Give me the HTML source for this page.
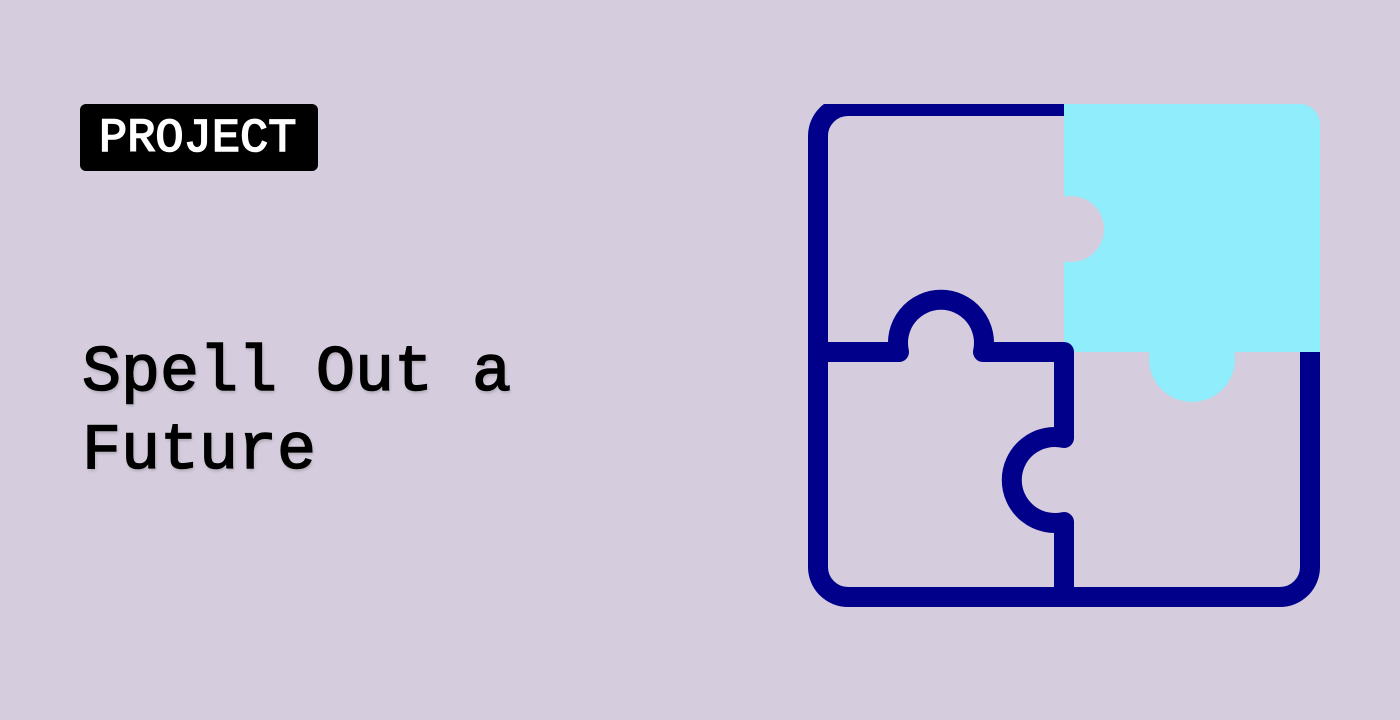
<!DOCTYPE html>
<html><head><meta charset="utf-8"><style>
html,body{margin:0;padding:0;}
body{width:1400px;height:720px;background:#d5ccdd;position:relative;overflow:hidden;font-family:"Liberation Mono",monospace;}
.badge{position:absolute;left:80px;top:104px;width:238px;height:67px;background:#000;border-radius:6px;color:#fff;font-size:47px;line-height:71px;box-sizing:border-box;padding-left:19px;-webkit-text-stroke:1.6px #fff;}
.title{position:absolute;left:82px;top:334px;font-size:65px;line-height:78px;color:#000;-webkit-text-stroke:1.6px #000;text-shadow:0 0 2px #fff,1px 2px 3px rgba(0,0,0,.25);}
svg{position:absolute;left:0;top:0;}
</style></head><body>
<div class="badge">PROJECT</div>
<div class="title">Spell Out a<br>Future</div>
<svg width="1400" height="720" viewBox="0 0 1400 720">
<defs><clipPath id="c"><rect x="0" y="104" width="1400" height="616"/></clipPath></defs>
<g clip-path="url(#c)">
<path d="M1064 104 H1300 A20 20 0 0 1 1320 124 V352 H1064 Z" fill="#90edfb"/>
<circle cx="1192" cy="359" r="43" fill="#90edfb"/>
<circle cx="1071" cy="229" r="33" fill="#d5ccdd"/>
<path d="M1064 106 H848 A30 30 0 0 0 818 136 V567 A30 30 0 0 0 848 597 H1280 A30 30 0 0 0 1310 567 V352" fill="none" stroke="#00008b" stroke-width="20"/>
<path d="M828 352 H899 A43 43 0 1 1 983 352 H1064 V438 A43 43 0 1 0 1064 522 V597" fill="none" stroke="#00008b" stroke-width="20" stroke-linejoin="round"/>
</g>
</svg>
</body></html>
